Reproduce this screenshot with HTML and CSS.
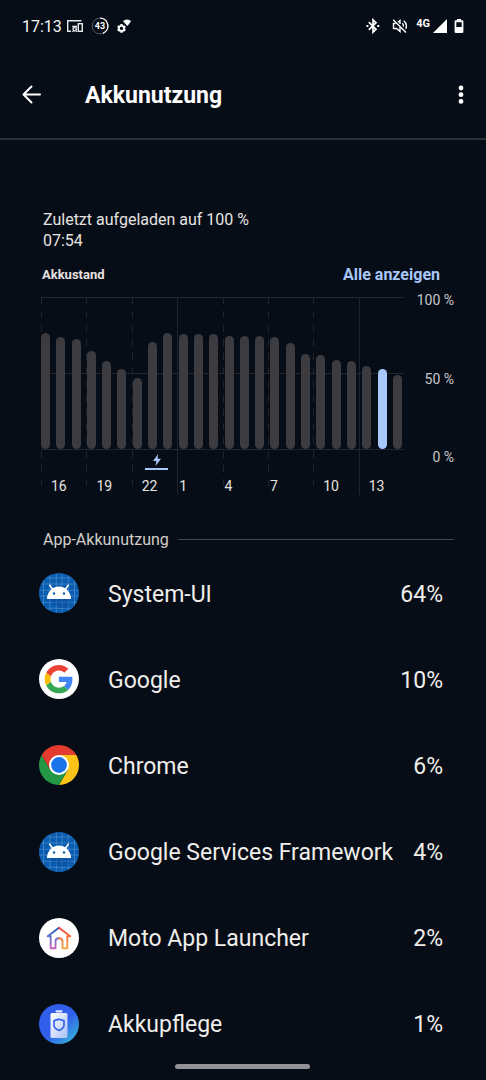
FILE: index.html
```html
<!DOCTYPE html>
<html lang="de">
<head>
<meta charset="utf-8">
<meta name="viewport" content="width=device-width, initial-scale=1">
<title>Akkunutzung</title>
<link rel="stylesheet" href="styles.css">
</head>
<body>
<svg class="defs" aria-hidden="true">
  <defs>
    <symbol id="android" viewBox="0 0 40 40">
      <circle cx="20" cy="20" r="20" fill="#0a5cb0"/>
      <path d="M4.500 7.500V32.500M11 2.500V37.500M17.300.5V39.500M23 .5V39.500M29.300 2.500V37.500M35.500 7.500V32.500M7.500 5H32.500M2.500 11H37.500M.5 17.300H39.500M.5 23H39.500M2.500 29.300H37.500M7.500 35.300H32.500" stroke="#4c8ccf" stroke-width=".7" fill="none"/>
      <path d="M8 26L20 35H29L32 26Z" fill="#0a4c98" opacity=".4"/>
      <path d="M8 26a12 12.500 0 0 1 24 0Z" fill="#fff"/>
      <path d="M10.700 12.200l3.300 4.600M29.300 12.200L26 16.800" stroke="#fff" stroke-width="1.500" stroke-linecap="round"/>
      <circle cx="15" cy="20.500" r="1.200" fill="#0a5cb0"/><circle cx="25" cy="20.500" r="1.200" fill="#0a5cb0"/>
    </symbol>
  </defs>
</svg>

<div class="status">
  <div class="status-group">
    <span class="clock">17:13</span>
    <svg class="i-devices" width="18" height="14" viewBox="0 0 18 14" fill="none" stroke="#e8e8ea" stroke-width="1.400"><path d="M15.500 1.700H1.700V12.300H5"/><rect x="12.300" y="4.700" width="4" height="7.600"/><circle cx="8.700" cy="10.300" r="1.700"/><path d="M6.800 12V13M10.600 12V13M6.800 8.500V7.300H10.600V8.500" stroke-width="1.200"/></svg>
    <svg class="i-count" width="18" height="18" viewBox="0 0 18 18"><circle cx="9" cy="9" r="7.900" fill="none" stroke="#55585e" stroke-width="1"/><path d="M9 1.100A7.900 7.900 0 0 1 12 16.300" fill="none" stroke="#fff" stroke-width="1.400"/><text x="9" y="12.300" text-anchor="middle" class="count-text">43</text></svg>
    <svg class="i-gear" width="16" height="16" viewBox="0 0 16 16"><circle cx="5.500" cy="10.400" r="2.600" fill="none" stroke="#fff" stroke-width="1.800"/><path d="M5.500 6V7.500M5.500 13.300V14.800M1.700 8.200L3 9M8 11.800L9.300 12.600M1.700 12.600L3 11.800M8 9L9.300 8.200" stroke="#fff" stroke-width="2.400"/><path d="M7 3Q11 0 15.200 3L11.500 8L9.500 6Z" fill="#fff"/></svg>
  </div>
  <div class="status-group">
    <svg class="i-bt" width="14" height="16" viewBox="0 0 14 16" fill="none" stroke="#fff" stroke-width="1.700"><path d="M2.800 4.200L10 11.300L7 14.200V1.800L10 4.700L2.800 11.800"/><path d="M.5 8H2.400M11.300 8H13.200" stroke-width="2"/></svg>
    <svg class="i-mute" width="16" height="16" viewBox="0 0 16 16" fill="none" stroke="#fff" stroke-width="1.400"><path d="M1.200 1.700L14 14.500"/><path d="M3.500 5.500H1.500V10.500H4.500L8 13.500V9M6 4.200L8 2.500V6M10.300 5.300Q11.700 6.500 11.300 8.500M11.700 2.700Q15.800 6 13.700 10.800"/></svg>
    <span class="net">4G</span>
    <svg class="i-signal" width="14" height="14" viewBox="0 0 14 14"><path d="M14 0V14H0Z" fill="#fff"/></svg>
    <svg class="i-batt" width="10" height="14" viewBox="0 0 10 14"><path d="M3 0H7V1.300H8.200Q9.400 1.300 9.400 2.500V12.800Q9.400 14 8.200 14H1.800Q.6 14 .6 12.800V2.500Q.6 1.300 1.800 1.300H3ZM2.300 3.300V8H7.700V3.300Z" fill="#fff" fill-rule="evenodd"/></svg>
  </div>
</div>

<header class="bar">
  <button class="icon-btn" aria-label="Zurück"><svg width="20" height="20" viewBox="0 0 20 20" fill="none" stroke="#fff" stroke-width="2" stroke-linecap="round" stroke-linejoin="round"><path d="M18 9.500H1.500M9.500 1.500L1.500 9.500L9.500 17.500"/></svg></button>
  <h1>Akkunutzung</h1>
  <button class="icon-btn" aria-label="Weitere Optionen"><svg width="6" height="20" viewBox="0 0 6 20" fill="#fff"><circle cx="3" cy="3" r="2.400"/><circle cx="3" cy="9.700" r="2.400"/><circle cx="3" cy="16.400" r="2.400"/></svg></button>
</header>

<main>
  <p class="last">Zuletzt aufgeladen auf 100 %<br>07:54</p>
  <div class="chart-head"><h2>Akkustand</h2><a href="#all">Alle anzeigen</a></div>
  <section class="chart" aria-label="Akkustand">
    <div class="area">
      <div class="cols"><i></i><i></i><i></i><i class="solid"></i><i></i><i></i><i></i><i class="solid"></i></div>
      <div class="bars" id="bars"></div>
      <div class="charging"><svg width="10" height="12" viewBox="0 0 10 12"><path d="M6.200 0L1 7H4.300L3.600 12L9 4.700H5.600Z" fill="#a8c7fa"/></svg></div>
      <div class="hours"><span class="two">16</span><span class="two">19</span><span class="two">22</span><span>1</span><span>4</span><span>7</span><span class="two">10</span><span class="two">13</span></div>
    </div>
    <div class="scale"><span>100 %</span><span>50 %</span><span>0 %</span></div>
  </section>

  <h2 class="section"><span>App-Akkunutzung</span></h2>
  <ul class="apps">
    <li><svg class="app" viewBox="0 0 40 40"><use href="#android"/></svg><span>System-UI</span><b>64%</b></li>
    <li><svg class="app" viewBox="0 0 40 40"><circle cx="20" cy="20" r="20" fill="#fff"/><g transform="translate(5.700 6) scale(.59)"><path fill="#ea4335" d="M24 9.500c3.540 0 6.710 1.220 9.210 3.600l6.850-6.850C35.900 2.380 30.470 0 24 0 14.620 0 6.510 5.380 2.560 13.220l7.980 6.190C12.430 13.720 17.740 9.500 24 9.500z"/><path fill="#4285f4" d="M46.980 24.550c0-1.570-.15-3.090-.38-4.550H24v9.020h12.940c-.58 2.960-2.260 5.480-4.780 7.180l7.730 6c4.510-4.180 7.090-10.360 7.090-17.650z"/><path fill="#fbbc05" d="M10.530 28.590c-.48-1.450-.76-2.990-.76-4.590s.27-3.140.76-4.590l-7.980-6.190C.92 16.460 0 20.120 0 24c0 3.880.92 7.540 2.560 10.780l7.970-6.190z"/><path fill="#34a853" d="M24 48c6.480 0 11.930-2.130 15.890-5.810l-7.730-6c-2.150 1.450-4.920 2.300-8.160 2.300-6.260 0-11.570-4.220-13.470-9.910l-7.980 6.190C6.510 42.620 14.620 48 24 48z"/></g></svg><span>Google</span><b>10%</b></li>
    <li><svg class="app" viewBox="0 0 40 40"><path d="M20 10H37.300A20 20 0 0 1 20 40L28.700 25Z" fill="#fcc419"/><path d="M11.300 25L2.700 10A20 20 0 0 0 20 40L28.700 25L20 20Z" fill="#259846"/><path d="M20 20L11.300 25L2.700 10A20 20 0 0 1 37.300 10H20Z" fill="#e33b2e"/><circle cx="20" cy="20" r="10" fill="#fff"/><circle cx="20" cy="20" r="7.900" fill="#1a73e8"/></svg><span>Chrome</span><b>6%</b></li>
    <li><svg class="app" viewBox="0 0 40 40"><use href="#android"/></svg><span>Google Services Framework</span><b>4%</b></li>
    <li><svg class="app" viewBox="0 0 40 40"><defs><linearGradient id="hl" x1="0" y1="0" x2="0" y2="1"><stop stop-color="#1c57b8"/><stop offset=".4" stop-color="#5a78cc"/><stop offset="1" stop-color="#cf62bd"/></linearGradient><linearGradient id="hr" x1="0" y1="0" x2="0" y2="1"><stop stop-color="#ee4444"/><stop offset=".5" stop-color="#f47745"/><stop offset="1" stop-color="#f6a940"/></linearGradient></defs><circle cx="20" cy="20" r="20" fill="#fff"/><g fill="none" stroke-width="1.900" stroke-linejoin="round" stroke-linecap="round"><path d="M20 9.700L8.700 18.200H11.700V30.300H16.500V23.500Q16.500 20.300 20 20.300" stroke="url(#hl)"/><path d="M20 9.700L31.300 18.200H28.300V30.300H23.500V23.500Q23.500 20.300 20 20.300" stroke="url(#hr)"/></g></svg><span>Moto App Launcher</span><b>2%</b></li>
    <li><svg class="app" viewBox="0 0 40 40"><defs><linearGradient id="ab" x1=".2" y1=".2" x2=".9" y2=".95"><stop offset=".45" stop-color="#315eea"/><stop offset="1" stop-color="#35b4d8"/></linearGradient><linearGradient id="ac" x1="0" y1="0" x2="1" y2="1"><stop stop-color="#fff"/><stop offset="1" stop-color="#a9c0f5"/></linearGradient></defs><circle cx="20" cy="20" r="20" fill="url(#ab)"/><rect x="16.500" y="6.300" width="7" height="2.200" rx="1" fill="#dfe7ff"/><rect x="11.500" y="9" width="17" height="25" rx="1.500" fill="url(#ac)"/><path d="M20 15.200L25 16.700V21Q25 24.500 20 26.500Q15 24.500 15 21V16.700Z" fill="none" stroke="#315eea" stroke-width="1.600"/></svg><span>Akkupflege</span><b>1%</b></li>
  </ul>
</main>
<div class="home"></div>
<script src="chart.js"></script>
</body>
</html>
```
FILE: styles.css
```css
* { box-sizing: border-box; }
body { margin: 0; min-height: 100vh; display: flex; flex-direction: column; background: #060d17; color: #e6e3e0; font-family: Roboto, sans-serif; }
.defs { position: absolute; width: 0; height: 0; }
svg { display: block; flex: none; }
h1, h2, p, ul { margin: 0; padding: 0; }

.status { display: flex; justify-content: space-between; align-items: center; height: 52px; padding: 0 22px; }
.status-group { display: flex; align-items: center; }
.clock { font-size: 16px; font-weight: 400; color: #f4f4f6; }
.i-devices { margin-left: 4px; }
.i-count { margin-left: 7px; }
.count-text { font: 700 9px Roboto, sans-serif; fill: #fff; }
.i-gear { margin-left: 7px; }
.i-mute { margin-left: 12px; }
.net { margin: 0 3px 6px 8px; font-size: 11px; line-height: 13px; font-weight: 700; color: #fff; }
.i-batt { margin-left: 7px; }

.bar { display: flex; align-items: center; height: 88px; padding: 0 22px; border-bottom: 2px solid #2b2f36; }
.icon-btn { display: flex; padding: 0; border: 0; background: none; }
h1 { flex: 1; margin-left: 43px; padding-top: 2px; font-size: 23px; line-height: 28px; font-weight: 700; color: #fff; }

main { flex: 1; display: flex; flex-direction: column; padding: 69px 32px 13px 39px; }
.last { padding-left: 4px; font-size: 16px; line-height: 21px; }
.chart-head { display: flex; justify-content: space-between; align-items: center; height: 46px; padding: 0 14px 0 3px; }
.chart-head h2 { font-size: 13px; font-weight: 700; }
.chart-head a { font-size: 16px; font-weight: 700; color: #a8c7fa; text-decoration: none; }

.chart { display: flex; gap: 8px; padding-left: 2px; }
.area { position: relative; flex: 1; height: 198px; }
.cols { position: absolute; inset: 0; display: grid; grid-template-columns: repeat(8, 1fr); }
.cols i { width: 1px; height: 195px; background: repeating-linear-gradient(#20252d 0 7px, transparent 7px 14px); }
.cols .solid { height: 198px; background: #20252d; }
.bars { position: relative; display: flex; justify-content: space-between; align-items: flex-end; height: 153px; padding-right: 2px; border: solid #22262e; border-width: 1px 0; background: linear-gradient(#22262e, #22262e) 0 50% / 100% 1px no-repeat; }
.bars span { width: 9px; border-radius: 5px; background: #3b3b40; }
.bars .active { background: #a8c7fa; }
.charging { position: absolute; top: 157px; left: 104px; width: 23px; display: flex; justify-content: center; padding-bottom: 2px; border-bottom: 2px solid #a8c7fa; }
.hours { position: relative; display: grid; grid-template-columns: repeat(8, 1fr); padding-top: 26px; font-size: 14px; line-height: 20px; }
.hours span { padding-left: 2px; }
.hours .two { padding-left: 10px; }
.scale { display: flex; flex-direction: column; justify-content: space-between; align-items: flex-end; width: 42px; height: 175px; margin-top: -6px; font-size: 14px; line-height: 18px; color: #c9c5ca; }

.section { display: flex; align-items: center; gap: 9px; padding: 33px 0 0 4px; font-size: 16px; line-height: 20px; font-weight: 400; color: #d3cdc9; }
.section span { padding-top: 2px; }
.section::after { content: ""; flex: 1; height: 1px; background: #45464b; }
.apps { flex: 1; display: flex; flex-direction: column; list-style: none; }
.apps li { flex: 1; min-height: 86px; display: flex; align-items: center; padding-right: 11px; font-size: 23px; line-height: 28px; color: #f0eeeb; }
.apps span { flex: 1; margin-left: 29px; padding-top: 3px; }
.apps b { padding-top: 3px; font-weight: 400; }
.app { width: 40px; height: 40px; }
.home { position: fixed; bottom: 11px; left: 50%; width: 135px; height: 5px; margin-left: -68px; border-radius: 3px; background: #939198; }
```
FILE: chart.js
```js
const levels = [77, 74, 73, 65, 58, 53, 47, 71, 77, 76, 76, 76, 75, 75, 75, 74, 70, 63, 62, 59, 58, 55, 53, 49];
const bars = document.getElementById("bars");
levels.forEach((level, i) => {
  const bar = document.createElement("span");
  bar.style.height = level + "%";
  if (i === 22) bar.className = "active";
  bars.append(bar);
});
```
